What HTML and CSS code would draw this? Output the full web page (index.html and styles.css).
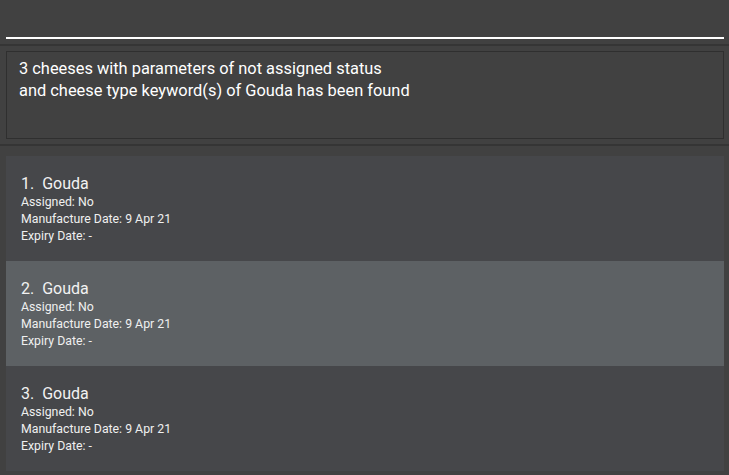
FILE: index.html
```html
<!DOCTYPE html>
<html>
<head>
<meta charset="utf-8">
<link rel="stylesheet" href="styles.css">
</head>
<body>
<div class="app">
  <div class="command">
    <div class="command-input"></div>
  </div>
  <div class="sep"></div>
  <div class="result-area">
    <div class="result-box">
      <p>3 cheeses with parameters of not assigned status</p>
      <p>and cheese type keyword(s) of Gouda has been found</p>
    </div>
  </div>
  <div class="sep"></div>
  <div class="list-area">
    <div class="list">
      <div class="card">
        <div class="title">1.&nbsp; Gouda</div>
        <div class="detail">Assigned: No</div>
        <div class="detail">Manufacture Date: 9 Apr 21</div>
        <div class="detail">Expiry Date: -</div>
      </div>
      <div class="card selected">
        <div class="title">2.&nbsp; Gouda</div>
        <div class="detail">Assigned: No</div>
        <div class="detail">Manufacture Date: 9 Apr 21</div>
        <div class="detail">Expiry Date: -</div>
      </div>
      <div class="card">
        <div class="title">3.&nbsp; Gouda</div>
        <div class="detail">Assigned: No</div>
        <div class="detail">Manufacture Date: 9 Apr 21</div>
        <div class="detail">Expiry Date: -</div>
      </div>
    </div>
  </div>
</div>
</body>
</html>
```

FILE: styles.css
```css
html, body {
  margin: 0;
  padding: 0;
  background: #414141;
  font-family: Roboto, "Liberation Sans", sans-serif;
  color: #ffffff;
}
.app {
  width: 729px;
  height: 475px;
  display: flex;
  flex-direction: column;
  overflow: hidden;
}
.command {
  height: 44px;
  padding: 0 5px 0 6px;
  box-sizing: border-box;
}
.command-input {
  height: 37px;
  border-bottom: 2px solid #ffffff;
}
.sep {
  height: 2px;
  background: #353535;
}
.result-area {
  height: 98px;
  padding: 5px 5px 0 6px;
  box-sizing: border-box;
}
.result-box {
  height: 88px;
  box-sizing: border-box;
  border: 1px solid #2f2f2f;
  padding: 6px 12px;
  font-size: 16.4px;
  line-height: 22px;
}
.result-box p {
  margin: 0;
}
.list-area {
  flex: 1;
  padding: 10px 5px 4px 6px;
}
.list {
  background: #46474a;
  display: flex;
  flex-direction: column;
}
.card {
  height: 105px;
  box-sizing: border-box;
  padding: 18px 15px 0 15px;
}
.card.selected {
  background: #5d6164;
}
.title {
  font-size: 16px;
  line-height: 20px;
  color: #f2f2f2;
}
.detail {
  font-size: 12.3px;
  line-height: 17px;
  color: #f0f0f0;
}
```
